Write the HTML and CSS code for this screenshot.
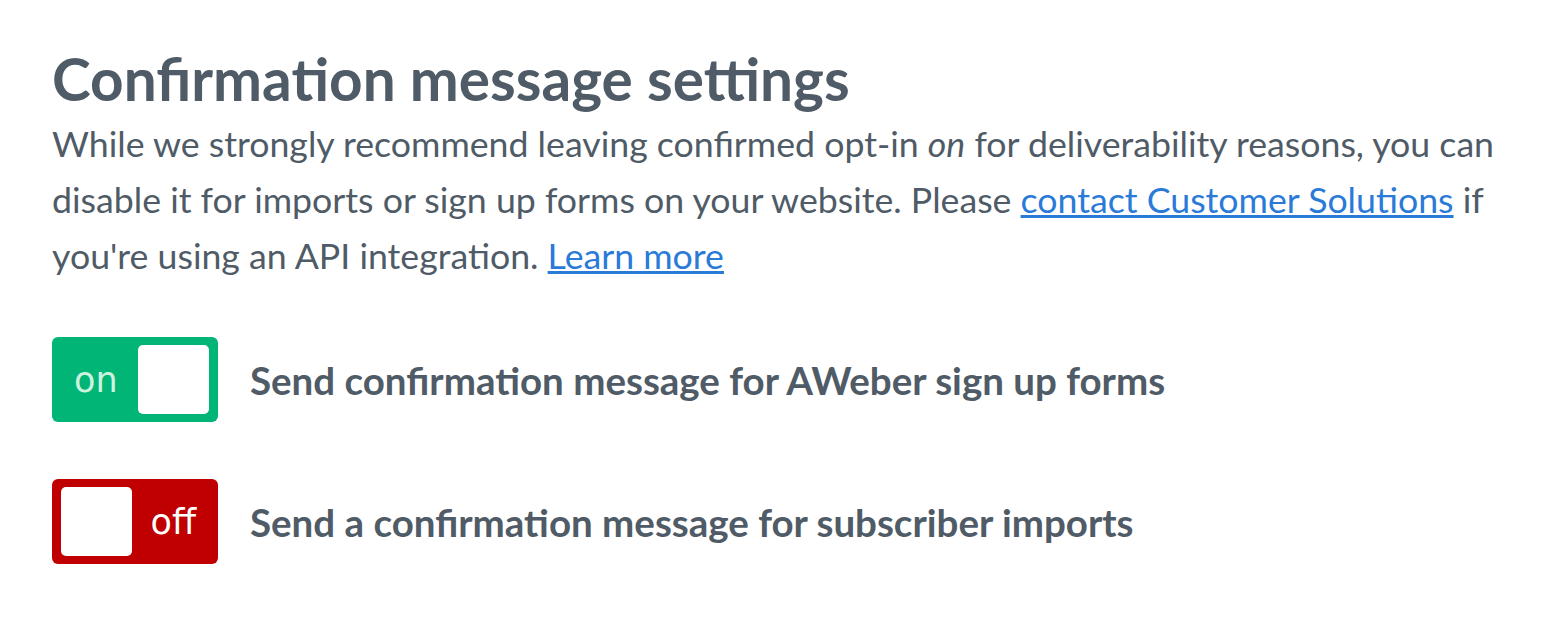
FILE: index.html
```html
<!DOCTYPE html>
<html lang="en">
<head>
  <meta charset="UTF-8" />
  <title>Confirmation message settings</title>
  <link rel="stylesheet" href="styles.css">
</head>
<body>
  <div class="settings">
    <h2>Confirmation message settings</h2>
    <p class="intro">While we strongly recommend leaving confirmed opt-in <em>on</em> for deliverability reasons, you can disable it for imports or sign up forms on your website. Please <a href="#">contact Customer Solutions</a> if you're using an API integration. <a href="#">Learn more</a></p>

    <div class="option">
      <span class="toggle on"><span class="toggle-text">on</span><span class="knob"></span></span>
      <span class="option-label">Send confirmation message for AWeber sign up forms</span>
    </div>

    <div class="option">
      <span class="toggle off"><span class="knob"></span><span class="toggle-text">off</span></span>
      <span class="option-label">Send a confirmation message for subscriber imports</span>
    </div>
  </div>
</body>
</html>
```

FILE: styles.css
```css
body {
  margin: 0;
  background: #fff;
  font-family: Lato, "Open Sans", sans-serif;
  color: #4f5b66;
}

.settings {
  padding: 40px 30px 0 52px;
}

h2 {
  margin: 0;
  font-size: 58.5px;
  font-weight: 700;
  line-height: 76px;
}

.intro {
  margin: 0;
  font-size: 35.7px;
  line-height: 56px;
}

.intro a {
  color: #2a7ad8;
}

.option {
  display: flex;
  align-items: center;
  gap: 32px;
}

.option:first-of-type {
  margin-top: 53px;
}

.option + .option {
  margin-top: 57px;
}

.toggle {
  display: flex;
  align-items: center;
  justify-content: space-between;
  box-sizing: border-box;
  width: 166px;
  height: 85px;
  padding: 8px 9px;
  border-radius: 6px;
  color: #cdf2df;
  font-family: "DejaVu Sans", sans-serif;
  font-size: 35px;
}

.toggle.on {
  background: #00b576;
  padding-left: 22px;
}

.toggle.off {
  background: #c00000;
  color: #fff;
  padding-right: 22px;
}

.knob {
  width: 71px;
  height: 69px;
  background: #fff;
  border-radius: 5px;
}

.option-label {
  font-size: 38.5px;
  font-weight: 700;
}
```
